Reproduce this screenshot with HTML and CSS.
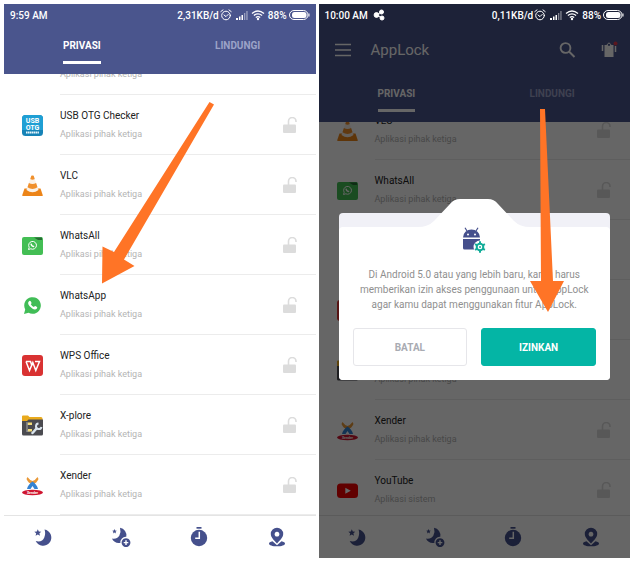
FILE: index.html
```html
<!DOCTYPE html>
<html lang="id">
<head>
<meta charset="utf-8">
<meta name="viewport" content="width=device-width, initial-scale=1">
<title>AppLock</title>
<link rel="stylesheet" href="styles.css">
</head>
<body>
<svg class="defs" aria-hidden="true">
  <symbol id="alarm" viewBox="0 0 12 12"><g fill="none" stroke="#fff" stroke-width="1" stroke-linecap="round"><circle cx="6" cy="6.5" r="4.3"/><path d="M.8 2.6 3 .9M11.2 2.6 9 .9M4 6l2 1.6L8.2 5.4"/></g></symbol>
  <symbol id="signal" viewBox="0 0 12 12"><g fill="#fff"><path d="M0 9h2v2H0zM3 7.500h1.500V11H3zM5.500 6H7v5H5.500z"/><path opacity=".45" d="M8 4h1.300v7H8zM10.300 2h1.300v9h-1.300z"/></g></symbol>
  <symbol id="wifi" viewBox="0 0 14 12"><g fill="none" stroke="#fff" stroke-width="1.300"><path d="M1 4.500q6-5 12 0M2.900 6.500q4.100-3.300 8.200 0M4.800 8.400q2.200-1.700 4.400 0"/></g><circle cx="7" cy="10" r="1.200" fill="#fff"/></symbol>
  <symbol id="battery" viewBox="0 0 21 10"><rect x=".5" y=".5" width="18.500" height="9" rx="4.500" fill="none" stroke="#fff"/><rect x="3" y="2" width="14.500" height="6" rx="2.500" fill="#fff"/><path d="M20 3.500v3" stroke="#fff"/></symbol>
  <symbol id="lock" viewBox="0 0 14 16"><rect y="7.500" width="13" height="8.500" rx="1" fill="#dcdcdc"/><path d="M5.500 8V4.300a3.600 3.600 0 0 1 7.500 0V5" fill="none" stroke="#dcdcdc" stroke-width="1.600"/></symbol>
  <symbol id="vlc" viewBox="0 0 21 21"><path d="M2.500 13.500h16l2.300 6.700q.1.800-.7.800H.9q-.8 0-.7-.8z" fill="#ec8418"/><path d="M9.300.8q1.200-.8 2.400 0L16.500 15q-6 4.500-12 0z" fill="#fbf1e6"/><path d="m9.300.8-1 3.200q2.200 1.300 4.400 0l-1-3.200q-1.200-.8-2.400 0zM6.900 8l-1.400 4.300q5 3.200 10 0L14.100 8q-3.600 2-7.200 0z" fill="#f0902c"/></symbol>
  <symbol id="whatsall" viewBox="0 0 21 21"><rect y="2" width="21" height="18" rx="2" fill="#43be54"/><path d="M12 2.500h8v2.500h-4z" fill="#276b34"/><path d="m6.500 14.500.7-2.200a3.900 3.900 0 1 1 1.600 1.500z" fill="none" stroke="#fff" stroke-width="1"/><path d="M9 8.600q.3 2.800 3.200 3.100" fill="none" stroke="#fff" stroke-width="1.300"/></symbol>
  <symbol id="whatsapp" viewBox="0 0 21 21"><path d="m2 19 1.200-4.600a8.300 8.300 0 1 1 3.400 3.400z" fill="#41bd57"/><path d="M7.200 6q.8-.8 1.500.2l.8 1.600q.2.600-.7 1.400 1.100 2 3.100 2.900.9-1.300 1.400-1.100l1.700.9q.6.500-.1 1.500-1.600 1.900-4.700.1-3-1.800-4-4.500-.4-1.900 1-3z" fill="#fff"/></symbol>
  <symbol id="wps" viewBox="0 0 21 21"><rect width="21" height="21" rx="3" fill="#d93232"/><path d="M4 6.500h4.500L10 11M4 6.500l3.500 9 3.300-8 3 8 3.700-9H13" fill="none" stroke="#fff" stroke-width="1.500"/></symbol>
  <symbol id="xplore" viewBox="0 0 21 21"><path d="M0 1.500Q0 .5 1 .5h5l1.500 1.500H19q1.500 0 1.500 1.500V8H0z" fill="#e9aa1d"/><path d="M0 6h5l1.500-1.500H21V19q0 1.500-1.500 1.500h-18Q0 20.500 0 19z" fill="#4b4b50"/><path d="M5 7v10M5 9h3M5 16h3" stroke="#aaa" fill="none"/><path d="M6 7.500h4V10H6zM6 14h4v2.500H6z" fill="#f3dc79"/><path d="m10.500 18 4-4.500" stroke="#dbe6ef" stroke-width="2.500" stroke-linecap="round"/><path d="M16.500 8.500a2.800 2.800 0 1 0 3 3.500" fill="none" stroke="#dbe6ef" stroke-width="2"/></symbol>
  <symbol id="youtube" viewBox="0 0 21 21"><rect y="3.500" width="21" height="14.500" rx="3.500" fill="#f20000"/><path d="m8.300 7.800 5.500 3-5.500 3z" fill="#fff"/></symbol>
  <symbol id="moon" viewBox="0 0 20 20"><path d="M11.500 2.500a8.200 8.200 0 1 1-8.800 11.600q6.500 1.500 8.600-3.600 1.600-4.200.2-8z"/><path d="m4.800 2.200 1 2.300 2.500.2-1.900 1.600.6 2.500-2.200-1.300-2.200 1.300.6-2.500-1.900-1.600 2.500-.2z"/></symbol>
  <symbol id="moon-add" viewBox="0 0 20 20"><path d="M9 .8a7.600 7.600 0 0 1 6.300 9 5.300 5.300 0 0 0-5.800 6A8 8 0 0 1 .9 11.500q5 1 7.400-2.800Q10.300 5 9 .8z"/><path d="m3.500 2 .7 1.500 1.600.2-1.200 1.100.3 1.600-1.400-.8-1.400.8.300-1.600-1.200-1.100 1.600-.2z"/><path fill-rule="evenodd" d="M15 11.200a4.400 4.400 0 1 0 .01 0zM14.300 13.300h1.400v1.600h1.600v1.400h-1.600v1.600h-1.400v-1.600h-1.600v-1.400h1.600z"/></symbol>
  <symbol id="timer" viewBox="0 0 20 20"><path d="M7.500 0h5v1.700h-5z"/><circle cx="10" cy="11" r="8.200"/><path d="M10.300 4.800v6.500H6.200" fill="none" stroke="var(--surface)" stroke-width="1.500"/></symbol>
  <symbol id="pin" viewBox="0 0 20 20"><path fill-rule="evenodd" d="M10 .8a6.200 6.200 0 0 0-6.200 6.200C3.800 10.500 7 13 10 16.500c3-3.500 6.200-6 6.200-9.500A6.200 6.200 0 0 0 10 .8zm0 4a2.400 2.400 0 1 1-.01 0z"/><path d="M5.500 14.300Q2 15 2 16.700C2 18.200 5.500 19.300 10 19.300s8-1.100 8-2.600q0-1.700-3.500-2.400L10 18.300z"/></symbol>
</svg>

<main class="screens">
  <section class="phone" aria-label="Daftar aplikasi">
    <header class="header">
      <div class="status">
        <span class="clock">9:59 AM</span>
        <span>2,31KB/d</span>
        <svg class="s-alarm"><use href="#alarm"/></svg>
        <svg class="s-signal"><use href="#signal"/></svg>
        <svg class="s-wifi"><use href="#wifi"/></svg>
        <span>88%</span>
        <svg class="s-battery"><use href="#battery"/></svg>
      </div>
      <div class="tabs">
        <button class="tab active" type="button"><span>PRIVASI</span></button>
        <button class="tab" type="button"><span>LINDUNGI</span></button>
      </div>
    </header>
    <div class="list">
      <ul class="apps">
        <li class="app"><div class="info"><span class="kind">Aplikasi pihak ketiga</span></div></li>
        <li class="app"><svg class="logo" viewBox="0 0 21 21"><rect width="21" height="21" rx="3.500" fill="#1683b7"/><path d="M0 3.500A3.500 3.500 0 0 1 3.500 0h14A3.500 3.500 0 0 1 21 3.500V15H0z" fill="#1f9fd4"/><g class="logo-text"><text x="10.500" y="8" font-size="7">USB</text><text x="10.500" y="14.500" font-size="7">OTG</text></g><path d="M4 17.500h13" stroke="#e8f6fc" stroke-width="2" stroke-dasharray="1.500 .4"/></svg><div class="info"><span class="name">USB OTG Checker</span><span class="kind">Aplikasi pihak ketiga</span><button class="lock" type="button" aria-label="Kunci USB OTG Checker"><svg><use href="#lock"/></svg></button></div></li>
        <li class="app"><svg class="logo"><use href="#vlc"/></svg><div class="info"><span class="name">VLC</span><span class="kind">Aplikasi pihak ketiga</span><button class="lock" type="button" aria-label="Kunci VLC"><svg><use href="#lock"/></svg></button></div></li>
        <li class="app"><svg class="logo"><use href="#whatsall"/></svg><div class="info"><span class="name">WhatsAll</span><span class="kind">Aplikasi pihak ketiga</span><button class="lock" type="button" aria-label="Kunci WhatsAll"><svg><use href="#lock"/></svg></button></div></li>
        <li class="app"><svg class="logo"><use href="#whatsapp"/></svg><div class="info"><span class="name">WhatsApp</span><span class="kind">Aplikasi pihak ketiga</span><button class="lock" type="button" aria-label="Kunci WhatsApp"><svg><use href="#lock"/></svg></button></div></li>
        <li class="app"><svg class="logo"><use href="#wps"/></svg><div class="info"><span class="name">WPS Office</span><span class="kind">Aplikasi pihak ketiga</span><button class="lock" type="button" aria-label="Kunci WPS Office"><svg><use href="#lock"/></svg></button></div></li>
        <li class="app"><svg class="logo"><use href="#xplore"/></svg><div class="info"><span class="name">X-plore</span><span class="kind">Aplikasi pihak ketiga</span><button class="lock" type="button" aria-label="Kunci X-plore"><svg><use href="#lock"/></svg></button></div></li>
        <li class="app"><svg class="logo" viewBox="0 0 21 21"><path d="M5.500 2q2 3 5 4 3-1 5-4l1 2q-1.500 4-6 5.500Q6 8 4.500 4z" fill="#e99837"/><path d="M10.500 6.500q4.500 3 5.500 7.500h-3.500l-2-3-2 3H5q1-4.500 5.500-7.500z" fill="#3482d2"/><ellipse cx="10.500" cy="17.500" rx="10.500" ry="2.800" fill="#cf1530"/><text class="logo-text" x="10.500" y="18.700" font-size="3.500">Xender</text></svg><div class="info"><span class="name">Xender</span><span class="kind">Aplikasi pihak ketiga</span><button class="lock" type="button" aria-label="Kunci Xender"><svg><use href="#lock"/></svg></button></div></li>
      </ul>
    </div>
    <nav class="nav">
      <a href="#" aria-label="Mode malam"><svg><use href="#moon"/></svg></a>
      <a href="#" aria-label="Tambah mode"><svg><use href="#moon-add"/></svg></a>
      <a href="#" aria-label="Waktu"><svg><use href="#timer"/></svg></a>
      <a href="#" aria-label="Lokasi"><svg><use href="#pin"/></svg></a>
    </nav>
    <svg class="arrow" aria-hidden="true"><path d="M205.500 98 210 100.500 120 255.500 130.500 262 98 279.500 98.500 242.500 110 248z"/></svg>
  </section>

  <section class="phone dimmed" aria-label="Permintaan izin">
    <header class="header">
      <div class="status">
        <span>10:00 AM</span>
        <svg class="s-share clock" viewBox="0 0 12 12"><g fill="#fff" stroke="#fff"><path d="M3.500 6 8.500 3M3.500 6l5.500 3"/><circle cx="3.500" cy="6" r="2.400"/><circle cx="8.500" cy="3" r="2"/><circle cx="9" cy="9" r="2"/></g></svg>
        <span>0,11KB/d</span>
        <svg class="s-alarm"><use href="#alarm"/></svg>
        <svg class="s-signal"><use href="#signal"/></svg>
        <svg class="s-wifi"><use href="#wifi"/></svg>
        <span>88%</span>
        <svg class="s-battery"><use href="#battery"/></svg>
      </div>
      <div class="appbar">
        <button type="button" aria-label="Menu"><svg class="icon" viewBox="0 0 18 18"><path d="M1 3.500h16M1 9h16M1 14.500h16" stroke="#fff" stroke-width="1.500"/></svg></button>
        <h1 class="title">AppLock</h1>
        <button type="button" aria-label="Cari"><svg class="icon" viewBox="0 0 18 18"><g fill="none" stroke="#fff" stroke-width="1.900"><circle cx="7.500" cy="7" r="4.900"/><path d="m11 10.500 5.500 5.500"/></g></svg></button>
        <button type="button" aria-label="Tema"><svg class="icon" viewBox="0 0 18 18"><path d="M4.500 4h3.200q1.300 2 2.600 0h3.200v12h-9z" fill="#fff"/><path d="M2.500 4v6M15.500 5v6" stroke="#fff" stroke-width="1.500"/><path d="M7 4q2-4 4 0" stroke="#fff" fill="none"/><circle cx="15.500" cy="2.500" r="2" fill="#e23b4b"/></svg></button>
      </div>
      <div class="tabs">
        <button class="tab active" type="button"><span>PRIVASI</span></button>
        <button class="tab" type="button"><span>LINDUNGI</span></button>
      </div>
    </header>
    <div class="list">
      <ul class="apps scrolled">
        <li class="app"><svg class="logo"><use href="#vlc"/></svg><div class="info"><span class="name">VLC</span><span class="kind">Aplikasi pihak ketiga</span><button class="lock" type="button" aria-label="Kunci VLC"><svg><use href="#lock"/></svg></button></div></li>
        <li class="app"><svg class="logo"><use href="#whatsall"/></svg><div class="info"><span class="name">WhatsAll</span><span class="kind">Aplikasi pihak ketiga</span><button class="lock" type="button" aria-label="Kunci WhatsAll"><svg><use href="#lock"/></svg></button></div></li>
        <li class="app"><svg class="logo"><use href="#whatsapp"/></svg><div class="info"></div></li>
        <li class="app"><svg class="logo"><use href="#wps"/></svg><div class="info"></div></li>
        <li class="app"><svg class="logo"><use href="#xplore"/></svg><div class="info"><span class="kind">Aplikasi pihak ketiga</span></div></li>
        <li class="app"><svg class="logo" viewBox="0 0 21 21"><path d="M5.500 2q2 3 5 4 3-1 5-4l1 2q-1.500 4-6 5.500Q6 8 4.500 4z" fill="#e99837"/><path d="M10.500 6.500q4.500 3 5.500 7.500h-3.500l-2-3-2 3H5q1-4.500 5.500-7.500z" fill="#3482d2"/><ellipse cx="10.500" cy="17.500" rx="10.500" ry="2.800" fill="#cf1530"/><text class="logo-text" x="10.500" y="18.700" font-size="3.500">Xender</text></svg><div class="info"><span class="name">Xender</span><span class="kind">Aplikasi pihak ketiga</span><button class="lock" type="button" aria-label="Kunci Xender"><svg><use href="#lock"/></svg></button></div></li>
        <li class="app"><svg class="logo"><use href="#youtube"/></svg><div class="info"><span class="name">YouTube</span><span class="kind">Aplikasi sistem</span><button class="lock" type="button" aria-label="Kunci YouTube"><svg><use href="#lock"/></svg></button></div></li>
      </ul>
    </div>
    <nav class="nav">
      <a href="#" aria-label="Mode malam"><svg><use href="#moon"/></svg></a>
      <a href="#" aria-label="Tambah mode"><svg><use href="#moon-add"/></svg></a>
      <a href="#" aria-label="Waktu"><svg><use href="#timer"/></svg></a>
      <a href="#" aria-label="Lokasi"><svg><use href="#pin"/></svg></a>
    </nav>
    <div class="scrim">
      <div class="dialog" role="dialog" aria-label="Izin akses penggunaan">
        <svg class="bump" viewBox="0 0 120 32" aria-hidden="true"><path d="M4 28Q14 28 20 22L36 5Q40 0 46 0H74Q80 0 84 5L100 22Q106 28 116 28V32H4z" fill="#fff"/></svg>
        <div class="sheet">
          <svg class="robot" viewBox="0 0 24 26" aria-hidden="true"><g fill="#454f8c"><path d="M1 10.500a8.500 8 0 0 1 17 0z"/><path d="M3 .8 5 4M16 .8 14 4" stroke="#454f8c" stroke-width="1.200"/><path d="M1 12h17v9q0 1.500-1.500 1.500h-14Q1 22.500 1 21z"/></g><circle cx="6" cy="7.500" r="1" fill="#fff"/><circle cx="13" cy="7.500" r="1" fill="#fff"/><circle cx="18" cy="20" r="6.500" fill="#fff"/><g stroke="#12ad99" stroke-width="2"><path d="M18 14.300v11.400M13.100 17.200l9.800 5.600M13.100 22.800l9.800-5.600"/><circle cx="18" cy="20" r="3.300" fill="#fff"/></g><circle cx="18" cy="20" r="1" fill="#12ad99"/></svg>
          <p class="message">Di Android 5.0 atau yang lebih baru, kamu harus memberikan izin akses penggunaan untuk AppLock agar kamu dapat menggunakan fitur AppLock.</p>
          <div class="actions">
            <button class="btn" type="button">BATAL</button>
            <button class="btn primary" type="button">IZINKAN</button>
          </div>
        </div>
      </div>
    </div>
    <svg class="arrow" aria-hidden="true"><path d="M221 105h5l8 172h11l-16 31-18-31h11z"/></svg>
  </section>
</main>
</body>
</html>
```

FILE: styles.css
```css
* { box-sizing: border-box; }

:root {
  --indigo: #4a558d;
  --icon: #45508c;
  --surface: #fff;
}

body {
  margin: 0;
  background: #fff;
  color: #222;
  font-family: Roboto, "Liberation Sans", sans-serif;
  font-size: 10px;
}

button {
  margin: 0;
  padding: 0;
  border: 0;
  background: none;
  color: inherit;
  font: inherit;
}

svg { display: block; }

.defs {
  position: absolute;
  width: 0;
  height: 0;
}

.screens {
  display: flex;
  gap: 3px;
  height: 100vh;
  padding: 4px 2px 5px 4px;
}

.phone {
  position: relative;
  display: flex;
  flex: 1;
  flex-direction: column;
  min-width: 0;
  overflow: hidden;
  background: var(--surface);
}

.header {
  flex: none;
  background: var(--indigo);
  color: #fff;
}

.status {
  position: relative;
  display: flex;
  align-items: center;
  height: 22px;
  padding: 0 6px;
  font-weight: 500;
}

.dimmed .status { z-index: 2; }

.clock { margin-right: auto; }
.s-share { width: 12px; height: 12px; margin-left: 5px; }
.s-alarm { width: 12px; height: 12px; margin-left: 1px; }
.s-signal { width: 12px; height: 12px; margin-left: 4px; }
.s-wifi { width: 14px; height: 12px; margin: 0 3px; }
.s-battery { width: 21px; height: 10px; margin-left: 2px; }

.appbar {
  display: flex;
  align-items: center;
  gap: 24px;
  height: 48px;
  padding: 0 12px 0 15px;
}

.icon { width: 18px; height: 18px; }

.title {
  flex: 1;
  margin: 0 0 0 -5px;
  font-size: 15px;
  font-weight: 400;
}

.tabs {
  display: flex;
  height: 48px;
}

.tab {
  display: flex;
  flex: 1;
  align-items: flex-start;
  justify-content: center;
  padding-top: 13px;
  color: #9ca3c8;
  font-weight: 700;
  line-height: 14px;
}

.tab span {
  padding-bottom: 8px;
  border-bottom: 3px solid transparent;
}

.tab.active { color: #fff; }
.tab.active span { border-color: #fff; }

.list {
  display: flex;
  flex: 1;
  flex-direction: column;
  justify-content: flex-end;
  min-height: 0;
  overflow: hidden;
}

.apps {
  margin: 0;
  padding: 0;
  list-style: none;
}

.scrolled { margin-bottom: -5px; }

.app {
  display: flex;
  align-items: center;
  gap: 17px;
  height: 60px;
  padding-left: 18px;
}

.logo {
  flex: none;
  width: 21px;
  height: 21px;
}

.logo-text {
  fill: #fff;
  font-weight: 700;
  text-anchor: middle;
}

.info {
  display: grid;
  flex: 1;
  grid-template-columns: 1fr 14px;
  grid-template-rows: 14px 14px;
  align-content: center;
  align-items: center;
  row-gap: 5px;
  height: 60px;
  padding-right: 19px;
  border-bottom: 1px solid #ececec;
}

.info:first-child { margin-left: 38px; }

.name { grid-area: 1 / 1; }

.kind {
  grid-area: 2 / 1;
  color: #b4b4b4;
  font-size: 9px;
}

.lock { grid-area: 1 / 2 / 3 / 3; }

.lock svg {
  width: 14px;
  height: 16px;
}

.nav {
  display: flex;
  flex: none;
  height: 43px;
  border-top: 1px solid #e4e4e4;
}

.nav a {
  display: flex;
  flex: 1;
  align-items: center;
  justify-content: center;
}

.nav svg {
  width: 20px;
  height: 20px;
  fill: var(--icon);
}

.scrim {
  position: absolute;
  inset: 0;
  z-index: 1;
  display: flex;
  align-items: center;
  padding: 31px 20px 0;
  background: rgba(0, 0, 0, 0.6);
}

.dialog {
  position: relative;
  flex: 1;
  padding-top: 14px;
  border-radius: 4px;
  background: #f1f1f7;
}

.bump {
  position: absolute;
  top: -14px;
  left: calc(50% - 60px);
  width: 120px;
  height: 32px;
}

.sheet {
  display: flex;
  flex-direction: column;
  align-items: center;
  padding: 0 14px 14px;
  border-radius: 4px;
  background: #fff;
}

.robot {
  position: relative;
  width: 24px;
  height: 26px;
}

.message {
  margin: 14px 0 16px;
  color: #8f8f8f;
  line-height: 15px;
  text-align: center;
}

.actions {
  display: flex;
  gap: 14px;
  width: 100%;
}

.btn {
  flex: 1;
  height: 38px;
  border: 1px solid #e6e6ea;
  border-radius: 3px;
  color: #a9abb2;
  font-weight: 700;
}

.btn.primary {
  border-color: #04b5a5;
  background: #04b5a5;
  color: #fff;
}

.arrow {
  position: absolute;
  inset: 0;
  z-index: 3;
  width: 100%;
  height: 100%;
  fill: #ff7426;
  pointer-events: none;
}
```
